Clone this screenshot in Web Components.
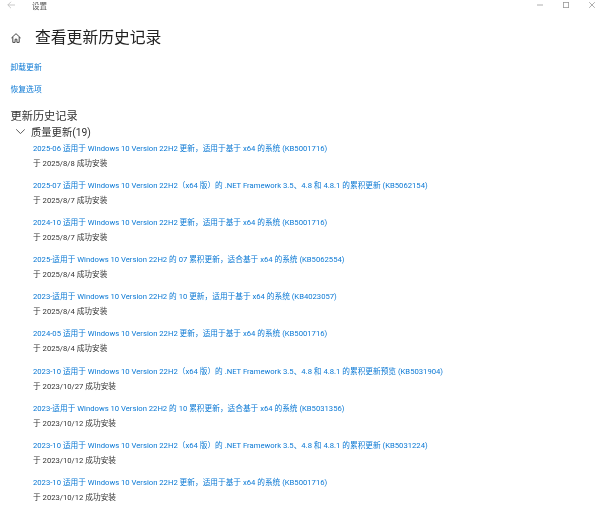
<!DOCTYPE html>
<html lang="zh-CN">
<head>
<meta charset="utf-8">
<title>设置</title>
<style>
  html, body { margin: 0; padding: 0; background: #fff; overflow: hidden; }
  body { width: 600px; height: 506px; font-family: Roboto, "Noto Sans CJK SC", sans-serif; }
</style>
</head>
<body>
<settings-app>
  <title-bar slot="top" label="设置"></title-bar>
  <page-title slot="top" label="查看更新历史记录"></page-title>
  <action-link slot="top" label="卸载更新" style="margin-top:16px"></action-link>
  <action-link slot="top" label="恢复选项" style="margin-top:14px"></action-link>
  <update-group title="更新历史记录" group="质量更新(19)">
    <update-item name="2025-06 适用于 Windows 10 Version 22H2 更新，适用于基于 x64 的系统 (KB5001716)" date="于 2025/8/8 成功安装"></update-item>
    <update-item name="2025-07 适用于 Windows 10 Version 22H2（x64 版）的 .NET Framework 3.5、4.8 和 4.8.1 的累积更新 (KB5062154)" date="于 2025/8/7 成功安装"></update-item>
    <update-item name="2024-10 适用于 Windows 10 Version 22H2 更新，适用于基于 x64 的系统 (KB5001716)" date="于 2025/8/7 成功安装"></update-item>
    <update-item name="2025-适用于 Windows 10 Version 22H2 的 07 累积更新，适合基于 x64 的系统 (KB5062554)" date="于 2025/8/4 成功安装"></update-item>
    <update-item name="2023-适用于 Windows 10 Version 22H2 的 10 更新，适用于基于 x64 的系统 (KB4023057)" date="于 2025/8/4 成功安装"></update-item>
    <update-item name="2024-05 适用于 Windows 10 Version 22H2 更新，适用于基于 x64 的系统 (KB5001716)" date="于 2025/8/4 成功安装"></update-item>
    <update-item name="2023-10 适用于 Windows 10 Version 22H2（x64 版）的 .NET Framework 3.5、4.8 和 4.8.1 的累积更新预览 (KB5031904)" date="于 2023/10/27 成功安装"></update-item>
    <update-item name="2023-适用于 Windows 10 Version 22H2 的 10 累积更新，适合基于 x64 的系统 (KB5031356)" date="于 2023/10/12 成功安装"></update-item>
    <update-item name="2023-10 适用于 Windows 10 Version 22H2（x64 版）的 .NET Framework 3.5、4.8 和 4.8.1 的累积更新 (KB5031224)" date="于 2023/10/12 成功安装"></update-item>
    <update-item name="2023-10 适用于 Windows 10 Version 22H2 更新，适用于基于 x64 的系统 (KB5001716)" date="于 2023/10/12 成功安装"></update-item>
  </update-group>
</settings-app>

<script>
const FONT = `Roboto, "Noto Sans CJK SC", sans-serif`;

class SettingsApp extends HTMLElement {
  constructor() {
    super();
    this.attachShadow({ mode: "open" });
    this.shadowRoot.innerHTML = `
      <style>
        :host { display: flex; flex-direction: column; width: 600px; height: 506px; overflow: hidden; background: #fff; font-family: ${FONT}; filter: blur(.25px); }
      </style>
      <slot name="top"></slot>
      <slot></slot>
    `;
  }
}

class TitleBar extends HTMLElement {
  constructor() {
    super();
    this.attachShadow({ mode: "open" });
    this.shadowRoot.innerHTML = `
      <style>
        :host { display: flex; align-items: center; height: 10px; padding-left: 7px; color: #555; font-size: 7.5px; }
        svg { display: block; flex: none; }
        .label { margin-left: 17px; }
        .controls { margin-left: auto; display: flex; gap: 20px; padding-right: 5px; }
      </style>
      <svg width="8" height="8" viewBox="0 0 8 8" fill="none" stroke="#bbb" stroke-width=".8"><path d="M4 .8 .8 4 4 7.2M.8 4H8"/></svg>
      <span class="label">${this.getAttribute("label")}</span>
      <div class="controls">
        <svg width="6" height="6" viewBox="0 0 6 6" fill="none" stroke="#999" stroke-width=".8"><path d="M0 3H6"/></svg>
        <svg width="6" height="6" viewBox="0 0 6 6" fill="none" stroke="#999" stroke-width=".8"><rect x=".4" y=".4" width="5.2" height="5.2"/></svg>
        <svg width="6" height="6" viewBox="0 0 6 6" fill="none" stroke="#999" stroke-width=".8"><path d="M.2 .2 5.8 5.8M5.8 .2 .2 5.8"/></svg>
      </div>
    `;
  }
}

class PageTitle extends HTMLElement {
  constructor() {
    super();
    this.attachShadow({ mode: "open" });
    this.shadowRoot.innerHTML = `
      <style>
        :host { display: flex; align-items: center; gap: 14px; margin-top: 17px; padding-left: 11px; height: 21px; color: #222; font-size: 15.8px; line-height: 21px; }
        svg { display: block; flex: none; }
      </style>
      <svg width="10" height="10" viewBox="0 0 10 10" fill="none" stroke="#333" stroke-width=".9"><path d="M.4 5 5 .7 9.6 5M1.8 4v5.4h2.3V6.2h1.8v3.2h2.3V4"/></svg>
      <span>${this.getAttribute("label")}</span>
    `;
  }
}

class ActionLink extends HTMLElement {
  constructor() {
    super();
    this.attachShadow({ mode: "open" });
    this.shadowRoot.innerHTML = `
      <style>
        :host { display: block; padding-left: 10.5px; height: 8px; line-height: 8px; font-size: 7.8px; color: #0a78d4; }
      </style>
      <span>${this.getAttribute("label")}</span>
    `;
  }
}

class UpdateGroup extends HTMLElement {
  constructor() {
    super();
    this.attachShadow({ mode: "open" });
    this.shadowRoot.innerHTML = `
      <style>
        :host { display: block; margin-top: 16px; }
        h2 { margin: 0; padding-left: 10.5px; font-weight: 400; font-size: 11.2px; line-height: 14px; color: #333; }
        .head { display: flex; align-items: center; gap: 6px; padding-left: 16px; height: 15px; font-size: 10.3px; color: #333; }
        svg { display: block; flex: none; }
        .items { display: flex; flex-direction: column; gap: 7.12px; margin-top: 1.9px; padding-left: 33px; }
      </style>
      <h2>${this.getAttribute("title")}</h2>
      <div class="head">
        <svg width="9" height="5" viewBox="0 0 9 5" fill="none" stroke="#333" stroke-width=".8"><path d="M.2 .3 4.5 4.6 8.8 .3"/></svg>
        <span>${this.getAttribute("group")}</span>
      </div>
      <div class="items"><slot></slot></div>
    `;
  }
}

class UpdateItem extends HTMLElement {
  constructor() {
    super();
    this.attachShadow({ mode: "open" });
    this.shadowRoot.innerHTML = `
      <style>
        :host { display: block; height: 30px; font-size: 7.68px; white-space: nowrap; }
        .name { height: 15px; line-height: 15px; color: #0a78d4; }
        .date { height: 15px; line-height: 15px; color: #333; }
      </style>
      <div class="name">${this.getAttribute("name")}</div>
      <div class="date">${this.getAttribute("date")}</div>
    `;
  }
}

customElements.define("settings-app", SettingsApp);
customElements.define("title-bar", TitleBar);
customElements.define("page-title", PageTitle);
customElements.define("action-link", ActionLink);
customElements.define("update-group", UpdateGroup);
customElements.define("update-item", UpdateItem);
</script>
</body>
</html>
